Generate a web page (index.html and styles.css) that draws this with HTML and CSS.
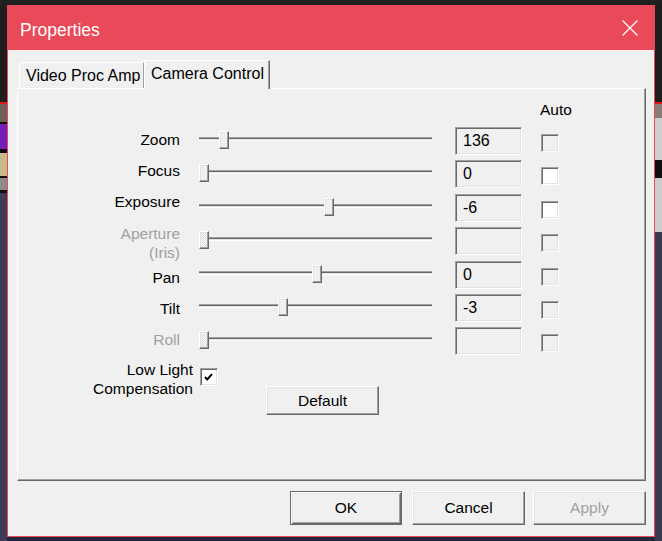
FILE: index.html
```html
<!DOCTYPE html>
<html>
<head>
<meta charset="utf-8">
<title>Properties</title>
<link rel="stylesheet" href="styles.css">
</head>
<body>
<div class="window">
  <div class="titlebar">
    <span class="title">Properties</span>
    <svg class="close" width="16" height="16" viewBox="0 0 16 16"><path d="M0.5 0.5 L15.5 15.5 M15.5 0.5 L0.5 15.5" stroke="#fff" stroke-width="1.2" fill="none"/></svg>
  </div>
  <div class="client">
    <div class="tabs">
      <div class="tab">Video Proc Amp</div>
      <div class="tab tab-active">Camera Control</div>
    </div>
    <div class="panel">
      <div class="grid">
        <div class="hdr-spacer"></div>
        <div class="hdr-auto">Auto</div>

        <div class="lbl l-zoom">Zoom</div>
        <div class="slider"><div class="track"></div><div class="thumb" style="left:20px"></div></div>
        <div class="edit">136</div>
        <div class="check"></div>

        <div class="lbl l-focus">Focus</div>
        <div class="slider"><div class="track"></div><div class="thumb" style="left:0px"></div></div>
        <div class="edit">0</div>
        <div class="check check-on"></div>

        <div class="lbl l-exposure">Exposure</div>
        <div class="slider"><div class="track"></div><div class="thumb" style="left:125px"></div></div>
        <div class="edit">-6</div>
        <div class="check check-on"></div>

        <div class="lbl lbl-disabled l-aperture">Aperture<br>(Iris)</div>
        <div class="slider"><div class="track"></div><div class="thumb thumb-disabled" style="left:0px"></div></div>
        <div class="edit"></div>
        <div class="check"></div>

        <div class="lbl l-pan">Pan</div>
        <div class="slider"><div class="track"></div><div class="thumb" style="left:113px"></div></div>
        <div class="edit">0</div>
        <div class="check"></div>

        <div class="lbl l-tilt">Tilt</div>
        <div class="slider"><div class="track"></div><div class="thumb" style="left:79px"></div></div>
        <div class="edit">-3</div>
        <div class="check"></div>

        <div class="lbl lbl-disabled l-roll">Roll</div>
        <div class="slider"><div class="track"></div><div class="thumb thumb-disabled" style="left:0px"></div></div>
        <div class="edit"></div>
        <div class="check"></div>
      </div>
      <div class="lowlight">
        <div class="ll-label">Low Light<br>Compensation</div>
        <div class="check check-on ll-check"><svg width="9" height="9" viewBox="0 0 9 9"><path d="M1 4 L3.2 6.5 L8 1.2" stroke="#000" stroke-width="2" fill="none"/></svg></div>
        <button class="btn btn-small">Default</button>
      </div>
    </div>
    <div class="buttons">
      <button class="btn btn-default">OK</button>
      <button class="btn">Cancel</button>
      <button class="btn btn-disabled">Apply</button>
    </div>
  </div>
</div>
</body>
</html>
```

FILE: styles.css
```css
html, body {
  margin: 0;
  padding: 0;
}
body {
  width: 662px;
  height: 541px;
  overflow: hidden;
  font-family: "Liberation Sans", Arial, sans-serif;
  font-size: 15.5px;
  color: #000;
  background:
    linear-gradient(#202020, #202020) left top / 100% 5px no-repeat,
    linear-gradient(to bottom, #1e1e1e 0 102px, #d81a1a 102px 104px, #6e6058 104px 122px, #0e0e0e 122px 124px, #7420b8 124px 149px, #0e0e0e 149px 153px, #c8b98a 153px 176px, #111 176px 178px, #8c8c8c 178px 190px, #111 190px 193px, #3d3b58 193px) left top / 7px 100% no-repeat,
    linear-gradient(to bottom, #1e1e1e 0 102px, #d81a1a 102px 104px, #8a7d78 104px 118px, #cfcfcf 118px 160px, #101010 160px 178px, #cdcdcd 178px 232px, #3a3a52 232px) right top / 7px 100% no-repeat,
    #24243a;
}

.window {
  box-sizing: border-box;
  margin: 5px 0 0 7px;
  width: 648px;
  height: 532px;
  border: 1px solid #e84a5a;
  background: #f0f0f0;
  display: flex;
  flex-direction: column;
}

.titlebar {
  height: 44px;
  background: #e84a5a;
  display: flex;
  align-items: center;
  justify-content: space-between;
  padding: 0 16px 0 12px;
  flex: none;
}
.title {
  color: #fff;
  font-size: 17.5px;
  line-height: 20px;
  margin-top: 3px;
}
.close {
  display: block;
}

.client {
  padding: 10px 8px 0 9px;
  display: flex;
  flex-direction: column;
}

.tabs {
  display: flex;
  align-items: flex-end;
  height: 29px;
  margin: 0 0 -1px 2px;
}
.tab {
  box-sizing: border-box;
  width: 125px;
  height: 26px;
  margin-bottom: 1px;
  padding: 3px 0 0 6px;
  line-height: 19px;
  font-size: 16px;
  border-top: 1px solid #fff;
  border-left: 1px solid #fff;
  border-right: 1px solid #a0a0a0;
  white-space: nowrap;
}
.tab-active {
  position: relative;
  z-index: 1;
  width: 126px;
  height: 29px;
  margin-bottom: 0;
  background: #f0f0f0;
  border-right: 1px solid #696969;
  box-shadow: inset -1px 0 0 #a0a0a0;
}

.panel {
  box-sizing: border-box;
  width: 629px;
  height: 393px;
  border-top: 1px solid #fff;
  border-left: 1px solid #fff;
  border-right: 1px solid #696969;
  border-bottom: 1px solid #696969;
  box-shadow: inset -1px -1px 0 #a0a0a0;
  padding-top: 11px;
}

.grid {
  display: grid;
  grid-template-columns: 181px 256px 86px auto;
  grid-template-rows: 27px 33px 34px 33px 34px 33px 33px 33px;
}
.hdr-spacer {
  grid-column: 1 / 4;
}
.hdr-auto {
  line-height: 19px;
  margin-left: -1px;
}

.lbl {
  text-align: right;
  padding-right: 19px;
  line-height: 19px;
  align-self: start;
  white-space: nowrap;
}
.lbl-disabled {
  color: #a0a0a0;
}
.l-zoom { margin-top: 3px; }
.l-focus { margin-top: 1px; }
.l-exposure { margin-top: -2px; }
.l-aperture { margin-top: -3px; }
.l-pan { margin-top: 7px; }
.l-tilt { margin-top: 5px; }
.l-roll { margin-top: 3px; }

.slider {
  position: relative;
  width: 233px;
  height: 28px;
}
.track {
  margin-top: 10px;
  height: 4px;
  background: linear-gradient(to bottom, #a0a0a0 0 1px, #696969 1px 2px, #e3e3e3 2px 3px, #fff 3px 4px);
}
.thumb {
  position: absolute;
  top: 4px;
  box-sizing: border-box;
  width: 10px;
  height: 18px;
  background: #f0f0f0;
  border-top: 1px solid #fff;
  border-left: 1px solid #fff;
  border-right: 1px solid #696969;
  border-bottom: 1px solid #696969;
  box-shadow: inset -1px -1px 0 #a0a0a0, inset 1px 1px 0 #e3e3e3;
}
.thumb-disabled {
  background: repeating-conic-gradient(#ffffff 0 25%, #d8d8d8 0 50%) 0 0 / 2px 2px;
}

.edit {
  box-sizing: border-box;
  width: 67px;
  height: 28px;
  border-top: 1px solid #a0a0a0;
  border-left: 1px solid #a0a0a0;
  border-right: 1px solid #fff;
  border-bottom: 1px solid #fff;
  box-shadow: inset 1px 1px 0 #696969, inset -1px -1px 0 #e3e3e3;
  padding: 3px 0 0 7px;
  line-height: 19px;
  font-size: 16px;
}

.check {
  box-sizing: border-box;
  width: 18px;
  height: 18px;
  margin-top: 7px;
  border-top: 1px solid #a0a0a0;
  border-left: 1px solid #a0a0a0;
  border-right: 1px solid #fff;
  border-bottom: 1px solid #fff;
  box-shadow: inset 1px 1px 0 #696969, inset -1px -1px 0 #e3e3e3;
  background: #f0f0f0;
}
.check-on {
  background: #fff;
}

.lowlight {
  display: flex;
  align-items: flex-start;
}
.ll-label {
  width: 175px;
  text-align: right;
  line-height: 19px;
  white-space: nowrap;
}
.ll-check {
  margin: 8px 0 0 7px;
  padding: 4px 0 0 3px;
}
.ll-check svg {
  display: block;
}

.btn {
  box-sizing: border-box;
  width: 113px;
  height: 34px;
  padding: 0;
  margin: 0;
  font-family: inherit;
  font-size: 15.5px;
  color: #000;
  background: #f0f0f0;
  border-top: 1px solid #fff;
  border-left: 1px solid #fff;
  border-right: 1px solid #696969;
  border-bottom: 1px solid #696969;
  border-radius: 0;
  box-shadow: inset -1px -1px 0 #a0a0a0, inset 1px 1px 0 #e3e3e3;
  display: flex;
  align-items: center;
  justify-content: center;
}
.btn-small {
  height: 29px;
  margin: 26px 0 0 48px;
}
.btn-default {
  width: 112px;
  margin-right: 2px;
  border: 1px solid #696969;
  box-shadow: inset 1px 1px 0 #fff, inset -1px -1px 0 #696969, inset 2px 2px 0 #e3e3e3, inset -2px -2px 0 #a0a0a0;
}
.btn-disabled {
  color: #a0a0a0;
}

.buttons {
  display: flex;
  justify-content: flex-end;
  gap: 8px;
  margin-top: 10px;
}
```
